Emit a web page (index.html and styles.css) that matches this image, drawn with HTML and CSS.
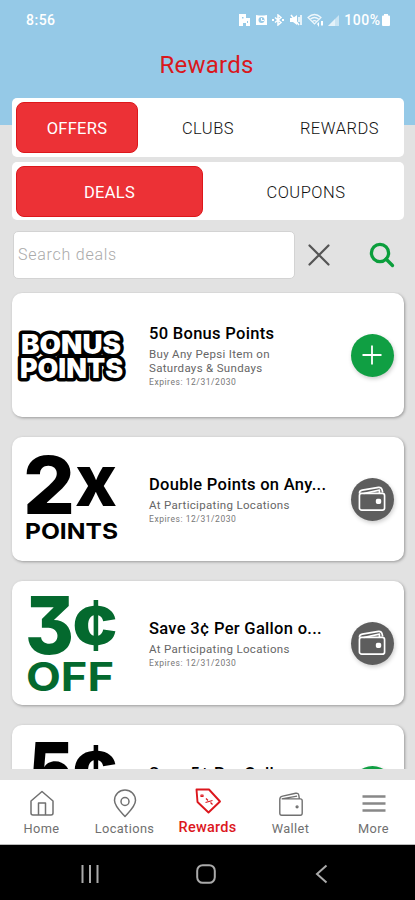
FILE: index.html
```html
<!DOCTYPE html>
<html lang="en">
<head>
<meta charset="utf-8">
<meta name="viewport" content="width=device-width, initial-scale=1">
<title>Rewards</title>
<link rel="stylesheet" href="styles.css">
</head>
<body>
<svg class="defs" width="0" height="0">
  <symbol id="wallet" viewBox="0 0 30 28">
    <path d="M5 8.500h20a2 2 0 0 1 2 2V24a2 2 0 0 1-2 2H5a2 2 0 0 1-2-2V9c0-2 1-3 3-3.400L20 2.500c2-.4 3 .5 3.300 2L24 8.500M5 8.500L21.500 5.500"/>
    <circle cx="21.500" cy="17" r="1"/>
  </symbol>
  <symbol id="wallet-solid" viewBox="0 0 32 29">
    <path d="M2.500 8q0-3 3-3.500L23 1.500q3-.3 3.800 2.500l.7 3"/>
    <path d="M7 8L24 4.500v3"/>
    <rect x="2.500" y="8" width="27" height="18" rx="2.500"/>
    <rect class="clasp" x="21" y="14.500" width="4" height="4" rx="1"/>
  </symbol>
</svg>
<div class="phone">
  <header class="status">
    <span class="clock">8:56</span>
    <div class="status-icons">
      <svg width="11" height="12" viewBox="0 0 11 12"><path fill="#fff" d="M0 0h7v4h4v8H7V9H4v3H0z"/><path fill="#95c9e7" d="M3 3h1.500v1.500H3zM8 7h1v2H8z"/></svg>
      <svg width="11" height="12" viewBox="0 0 11 12"><path fill="#fff" d="M0 1l3 .5h5L11 1v10H0z"/><circle cx="5.500" cy="6" r="3" fill="#95c9e7"/><path stroke="#fff" fill="none" d="M5.500 4v2.500H8"/></svg>
      <svg width="12" height="12" viewBox="0 0 12 12"><path stroke="#fff" stroke-width="1.500" fill="none" d="M3 3.500l6 5L6 11V1l3 2.500-6 5"/><path fill="#fff" d="M0 5h2v2H0zM10 5h2v2h-2z"/></svg>
      <svg width="12" height="12" viewBox="0 0 12 12"><path fill="#fff" d="M0 4h3l4-3v10L3 8H0z"/><path stroke="#fff" stroke-width="1.500" fill="none" d="M1 1l8 10M9 3v5M11 1v10"/></svg>
      <svg class="wifi" width="17" height="14" viewBox="0 0 17 14"><path stroke="#fff" stroke-width="1.200" fill="none" opacity=".85" d="M1 4.500q6.500-6 13 0L7.500 11zM3 6.500q4.500-4 9 0M5.200 8.700q2.300-2 4.600 0"/><path fill="#fff" d="M10 11l2-2v5zM14 8h2v4l-1 1-1-1z"/></svg>
      <svg width="11" height="11" viewBox="0 0 11 11"><path fill="#fff" opacity=".5" d="M11 0v11H0z"/><path fill="#fff" d="M7 4v7H0z" opacity=".5"/></svg>
      <span class="percent">100%</span>
      <svg width="8" height="12" viewBox="0 0 8 12"><path fill="#fff" d="M2 0h4v1.500h1q1 0 1 1V11q0 1-1 1H1q-1 0-1-1V2.500q0-1 1-1h1z"/></svg>
    </div>
  </header>
  <h1>Rewards</h1>
  <div class="tabs three"><button class="on">OFFERS</button><button>CLUBS</button><button>REWARDS</button></div>
  <div class="tabs two"><button class="on">DEALS</button><button>COUPONS</button></div>
  <div class="search">
    <div class="field">Search deals</div>
    <svg class="clear" width="22" height="22" viewBox="0 0 22 22"><path d="M1.500 1.500l19 19M20.500 1.500l-19 19"/></svg>
    <svg class="find" width="26" height="26" viewBox="0 0 26 26"><circle cx="11" cy="11" r="8.600"/><path d="M17 17l6.500 6.500"/></svg>
  </div>
  <main class="list">
    <article class="card">
      <svg class="art" width="120" height="124" viewBox="0 0 120 124">
        <g class="bonus"><text x="9" y="60.500" textLength="100" lengthAdjust="spacingAndGlyphs">BONUS</text><text x="8" y="84.500" textLength="103" lengthAdjust="spacingAndGlyphs">POINTS</text></g>
      </svg>
      <div class="info"><h2>50 Bonus Points</h2><p>Buy Any Pepsi Item on<br>Saturdays &amp; Sundays</p><small>Expires: 12/31/2030</small></div>
      <div class="action add"><svg width="20" height="20" viewBox="0 0 20 20"><path d="M10 .5v19M.5 10h19"/></svg></div>
    </article>
    <article class="card">
      <svg class="art" width="120" height="124" viewBox="0 0 120 124">
        <text class="big" x="11" y="76.500" textLength="52" lengthAdjust="spacingAndGlyphs">2</text><text class="ex" x="63" y="69" textLength="42" lengthAdjust="spacingAndGlyphs">x</text>
        <text class="pts" x="13" y="101.500" textLength="93" lengthAdjust="spacingAndGlyphs">POINTS</text>
      </svg>
      <div class="info"><h2>Double Points on Any...</h2><p>At Participating Locations</p><small>Expires: 12/31/2030</small></div>
      <div class="action"><svg width="30" height="27"><use href="#wallet-solid"/></svg></div>
    </article>
    <article class="card">
      <svg class="art green" width="120" height="124" viewBox="0 0 120 124">
        <text class="big" x="13" y="73" textLength="49" lengthAdjust="spacingAndGlyphs">3</text><text class="cent" x="60" y="70" textLength="46" lengthAdjust="spacingAndGlyphs">¢</text>
        <text class="off" x="14" y="110" textLength="88" lengthAdjust="spacingAndGlyphs">OFF</text>
      </svg>
      <div class="info"><h2>Save 3¢ Per Gallon o...</h2><p>At Participating Locations</p><small>Expires: 12/31/2030</small></div>
      <div class="action"><svg width="30" height="27"><use href="#wallet-solid"/></svg></div>
    </article>
    <article class="card">
      <svg class="art" width="120" height="124" viewBox="0 0 120 124">
        <text class="big" x="16" y="75" textLength="46" lengthAdjust="spacingAndGlyphs">5</text><text class="cent" x="60" y="71" textLength="46" lengthAdjust="spacingAndGlyphs">¢</text>
      </svg>
      <div class="info"><h2>Save 5¢ Per Gallon o...</h2></div>
      <div class="action add"><svg width="20" height="20" viewBox="0 0 20 20"><path d="M10 .5v19M.5 10h19"/></svg></div>
    </article>
  </main>
  <nav class="bottom">
    <a><svg width="28" height="30" viewBox="0 0 28 30"><path d="M3 12L14 2.500 25 12v12q0 2-2 2H5q-2 0-2-2zM10.500 26V14h7v12"/></svg><span>Home</span></a>
    <a><svg width="28" height="30" viewBox="0 0 28 30"><path d="M14 27.500C9 22 3.500 17 3.500 11.500a10.500 10.500 0 0 1 21 0C24.500 17 19 22 14 27.500z"/><circle cx="14" cy="12.500" r="4"/></svg><span>Locations</span></a>
    <a class="active"><svg width="28" height="30" viewBox="0 0 28 30"><path d="M2.500 1.500H15L26 13.500 14.500 24.500 3.500 14z"/><path class="thin" d="M11.500 14.500l7-2M12 10.500l2 2M16.500 14.500l2 2M7 7h2v1.500H7z"/></svg><span>Rewards</span></a>
    <a><svg width="28" height="30" viewBox="0 0 28 30"><use href="#wallet" y="1" width="28" height="28"/></svg><span>Wallet</span></a>
    <a class="more"><svg width="28" height="30" viewBox="0 0 28 30"><path d="M2.500 7.500h23M2.500 14.500h23M2.500 21.500h23"/></svg><span>More</span></a>
  </nav>
  <footer class="system">
    <svg width="20" height="20" viewBox="0 0 20 20"><path d="M2.500 1v18M10 1v18M17.500 1v18"/></svg>
    <svg width="20" height="20" viewBox="0 0 20 20"><rect x="1.200" y="1.200" width="17.600" height="17.600" rx="5.500"/></svg>
    <svg width="20" height="20" viewBox="0 0 20 20"><path d="M14.500 1.500L5 10l9.500 8.500"/></svg>
  </footer>
</div>
</body>
</html>
```
FILE: styles.css
```css
* { box-sizing: border-box; }
body { margin: 0; font-family: Roboto, "Liberation Sans", sans-serif; }
.defs { display: block; }
.phone { width: 415px; height: 900px; overflow: hidden; display: flex; flex-direction: column; background: linear-gradient(#95c9e7 125px, #e2e2e2 125px); }
.status { height: 40px; flex: none; padding: 0 25px 0 26px; display: flex; align-items: center; justify-content: space-between; color: #fff; font-size: 14px; font-weight: 500; }
.clock { letter-spacing: .5px; }
.status-icons { display: flex; align-items: center; gap: 5.500px; }
.wifi { margin-right: -2px; }
.percent { letter-spacing: .5px; margin-right: -4px; }
h1 { margin: 0; height: 58px; flex: none; text-align: center; line-height: 50px; font-size: 24px; font-weight: 400; letter-spacing: .25px; color: #d9181c; padding-right: 2px; }
.tabs { flex: none; height: 59px; margin: 0 11px 4px 12px; padding: 4px; background: #fff; border-radius: 5px; display: grid; }
.tabs.three { grid-template-columns: 122px 140px 1fr; padding-right: 3px; margin-bottom: 5px; }
.tabs.two { grid-template-columns: 187px 1fr; height: 58px; }
button { border: 0; background: none; padding: 0; font: 300 16.500px Roboto, sans-serif; letter-spacing: .5px; color: #111; padding-top: 1px; }
.two button:last-child { padding-left: 9px; }
button.on { background: #ec3136; border: 1px solid #dd171b; color: #fff; border-radius: 8px; font-weight: 400; letter-spacing: .3px; height: 51px; }
.two button { height: 51px; }
.search { flex: none; height: 48px; margin: 7px 20px 13px 13px; display: flex; align-items: center; }
.field { width: 282px; height: 48px; background: #fff; border: 1px solid #d3d3d3; border-radius: 5px; padding-left: 4px; line-height: 46px; font-size: 16px; font-weight: 300; letter-spacing: .75px; color: #aaa; }
.search svg { fill: none; stroke-linecap: round; }
.clear { margin-left: 13px; stroke: #555; stroke-width: 2.200; }
.find { margin-left: auto; stroke: #0b9e3c; stroke-width: 3.300; }
.list { height: 477px; flex: none; overflow: hidden; padding: 1px 11px 0 12px; display: flex; flex-direction: column; gap: 20.100px; }
.card { flex: none; height: 124px; background: #fff; border-radius: 10px; box-shadow: 1px 1px 3px #999; display: flex; align-items: center; }
.art { flex: none; width: 120px; }
.art text { font-family: Inter, sans-serif; font-weight: 800; font-feature-settings: "cv09"; }
.bonus text { font-size: 27.500px; font-weight: 900; fill: #fff; stroke: #000; stroke-width: 7px; stroke-linejoin: round; paint-order: stroke; }
.art .big { font-size: 80px; }
.art .ex { font-size: 72px; }
.art .pts { font-size: 22px; font-weight: 700; }
.green { fill: #04692e; }
.art .cent { font-size: 70px; }
.art .off { font-size: 39px; font-weight: 700; }
.info { margin-left: 17px; width: 202px; padding-top: 4px; white-space: nowrap; }
.card:last-child .info { padding-bottom: 28px; }
h2 { margin: 0 0 4px; font-size: 16.500px; line-height: 19px; font-weight: 500; color: #000; letter-spacing: .3px; }
p { margin: 0; font-size: 11.500px; line-height: 14px; letter-spacing: .32px; color: #666; }
small { display: block; font-size: 8.500px; line-height: 15px; letter-spacing: .55px; color: #777; }
.action { flex: none; width: 43px; height: 43px; border-radius: 50%; display: grid; place-items: center; background: #5d5d5d; box-shadow: 1px 2px 4px #ccc; margin-left: -.5px; }
.action svg { fill: none; stroke: #fff; stroke-width: 1.800; stroke-linejoin: round; }
.clasp { fill: #fff; }
.action.add { background: #109f43; }
.bottom { flex: none; height: 65px; margin-top: 11px; background: #fff; display: grid; grid-template-columns: repeat(5, 83px); border-bottom: 1px solid #bbb; }
.bottom a { display: flex; flex-direction: column; align-items: center; padding-top: 9px; color: #707070; font-size: 12.800px; letter-spacing: .4px; line-height: 20px; }
.bottom svg { flex: none; fill: none; stroke: #707070; stroke-width: 1.500; stroke-linejoin: round; }
.bottom .active { color: #dc171d; font-weight: 500; font-size: 14.500px; letter-spacing: .25px; line-height: 20px; padding-top: 8px; }
.bottom .active svg { stroke: #dc171d; stroke-width: 1.900; }
.bottom .active .thin { stroke-width: 1.200; }
.bottom .more svg { stroke: #888; stroke-width: 2.400; }
.system { flex: 1; background: #000; display: flex; align-items: center; justify-content: center; gap: 96px; padding: 2px 4px 0 0; }
.system svg { fill: none; stroke: #aaa; stroke-width: 2; }
```
